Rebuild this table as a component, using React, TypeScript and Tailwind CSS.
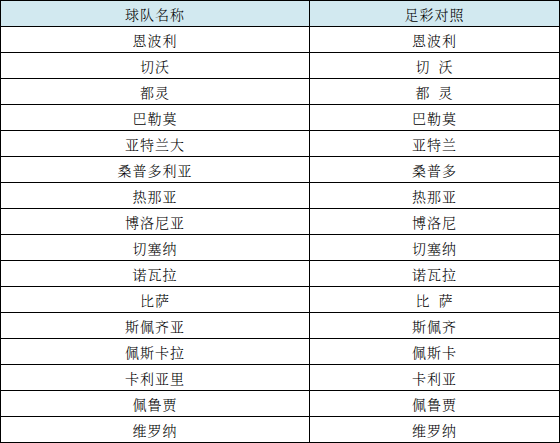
import React from "react";

const rows: [string, string][] = [
  ["恩波利", "恩波利"],
  ["切沃", "切\u2002沃"],
  ["都灵", "都\u2002灵"],
  ["巴勒莫", "巴勒莫"],
  ["亚特兰大", "亚特兰"],
  ["桑普多利亚", "桑普多"],
  ["热那亚", "热那亚"],
  ["博洛尼亚", "博洛尼"],
  ["切塞纳", "切塞纳"],
  ["诺瓦拉", "诺瓦拉"],
  ["比萨", "比\u2002萨"],
  ["斯佩齐亚", "斯佩齐"],
  ["佩斯卡拉", "佩斯卡"],
  ["卡利亚里", "卡利亚"],
  ["佩鲁贾", "佩鲁贾"],
  ["维罗纳", "维罗纳"],
];

export default function App() {
  const cell =
    "h-[26px] border-r border-b border-black flex items-center justify-center pt-[1px] text-[14px] tracking-[1px] whitespace-pre text-black font-light";
  return (
    <div
      className="w-[560px] h-[443px] bg-white"
      style={{ fontFamily: '"Noto Serif CJK SC", "Noto Sans CJK SC", serif' }}
    >
      <div className="grid grid-cols-[309px_250px] border-l border-t border-black w-[560px]">
        <div className={cell + " bg-[#d2e9f0]"}>球队名称</div>
        <div className={cell + " bg-[#d2e9f0]"}>足彩对照</div>
        {rows.map(([a, b], i) => (
          <React.Fragment key={i}>
            <div className={cell}>{a}</div>
            <div className={cell}>{b}</div>
          </React.Fragment>
        ))}
      </div>
    </div>
  );
}
